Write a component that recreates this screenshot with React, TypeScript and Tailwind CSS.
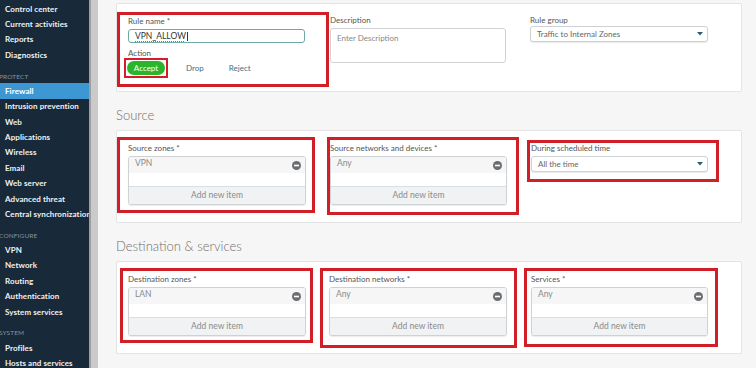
import { type ReactNode } from "react";

type PozycjaMenu = { etykieta: string; aktywna?: boolean } | { naglowek: string };

const menu: PozycjaMenu[] = [
  { etykieta: "Control center" },
  { etykieta: "Current activities" },
  { etykieta: "Reports" },
  { etykieta: "Diagnostics" },
  { naglowek: "PROTECT" },
  { etykieta: "Firewall", aktywna: true },
  { etykieta: "Intrusion prevention" },
  { etykieta: "Web" },
  { etykieta: "Applications" },
  { etykieta: "Wireless" },
  { etykieta: "Email" },
  { etykieta: "Web server" },
  { etykieta: "Advanced threat" },
  { etykieta: "Central synchronization" },
  { naglowek: "CONFIGURE" },
  { etykieta: "VPN" },
  { etykieta: "Network" },
  { etykieta: "Routing" },
  { etykieta: "Authentication" },
  { etykieta: "System services" },
  { naglowek: "SYSTEM" },
  { etykieta: "Profiles" },
  { etykieta: "Hosts and services" },
];

function Sidebar() {
  return (
    <nav className="w-[89px] shrink-0 overflow-hidden bg-[#182a3a] pt-[1px] font-['Lato',sans-serif]">
      {menu.map((p, i) =>
        "naglowek" in p ? (
          <div
            key={i}
            className="h-[20.6px] pt-[10px] -ml-[1px] text-[6.5px] leading-[8px] tracking-[0.02em] text-[#8593a0]"
          >
            {p.naglowek}
          </div>
        ) : (
          <div
            key={i}
            className={`flex h-[15.4px] items-center whitespace-nowrap pl-[5px] text-[8px] font-bold tracking-[0.01em] ${
              p.aktywna ? "bg-[#3c97d3] text-white" : "text-[#eef2f5]"
            }`}
          >
            {p.etykieta}
          </div>
        ),
      )}
    </nav>
  );
}

function Etykieta({ children, className = "" }: { children: ReactNode; className?: string }) {
  return <div className={`text-[8px] leading-[10px] text-[#555] ${className}`}>{children}</div>;
}

function Minus() {
  return (
    <svg width="9" height="9" viewBox="0 0 10 10" className="shrink-0">
      <circle cx="5" cy="5" r="5" fill="#6b6e71" />
      <rect x="2.2" y="4.1" width="5.6" height="1.8" fill="#fff" />
    </svg>
  );
}

function ListaElementow({ wartosc, szer }: { wartosc: string; szer: string }) {
  // odpowiada za pole listy z jednym elementem i wierszem dodawania
  return (
    <div
      className={`${szer} flex h-[49px] flex-col overflow-hidden rounded-[3px] border border-[#cfd2d4] bg-white shadow-[0_1px_1px_rgba(0,0,0,0.08)]`}
    >
      <div className="flex h-[16px] items-start justify-between bg-[#f6f6f6] pl-[6px] pr-[4px] pt-[1px]">
        <span className="text-[8.5px] leading-[10px] text-[#8a8a8a]">{wartosc}</span>
        <span className="mt-[3px]">
          <Minus />
        </span>
      </div>
      <div className="flex-1" />
      <div className="flex h-[18px] items-center justify-center border-t border-[#dcdfe1] bg-[#f1f2f3] text-[8.5px] text-[#8a8a8a]">
        Add new item
      </div>
    </div>
  );
}

function Wybor({ wartosc, szer, wys = "h-[16px]" }: { wartosc: string; szer: string; wys?: string }) {
  return (
    <div
      className={`${szer} ${wys} flex items-center justify-between rounded-[3px] border border-[#cfd2d4] bg-white pl-[6px] pr-[4px] shadow-[0_1px_1px_rgba(0,0,0,0.08)]`}
    >
      <span className="text-[8px] text-[#666]">{wartosc}</span>
      <svg width="6" height="4" viewBox="0 0 6 4">
        <path d="M0 0h6L3 3.5z" fill="#2f5d78" />
      </svg>
    </div>
  );
}

function Naglowek({ children }: { children: ReactNode }) {
  return (
    <h2 className="h-[38px] pt-[15px] text-[13px] leading-[16px] font-light text-[#6f6f6f]">{children}</h2>
  );
}

export default function App() {
  return (
    <div className="flex h-[368px] w-[756px] overflow-hidden bg-[#f6f6f6] font-['Lato',sans-serif]">
      <Sidebar />
      <div className="w-[9px] shrink-0 border-l-2 border-[#9e9e9e] bg-[#cacaca]" />

      <main className="flex-1 pl-[18px] pt-[3px]">
        {/* odpowiada za ogolne ustawienia reguly */}
        <section className="flex h-[89px] w-[626px] items-start rounded-[2px] border border-[#e4e4e4] bg-white">
          <div className="mt-[8px] h-[75px] w-[212px] border-[3px] border-[#d21e27]">
            <Etykieta className="ml-[8px] mt-[1px]">Rule name *</Etykieta>
            <div className="ml-[8px] mt-[3px] flex h-[14px] w-[177px] items-center rounded-[3px] border border-[#6fa9a6] pl-[6px] text-[8.5px] text-[#333]">
              <span className="underline decoration-[#e05050] decoration-dotted underline-offset-2">VPN_ALLOW</span>
              <span className="ml-[1px] h-[9px] w-px bg-[#333]" />
            </div>
            <Etykieta className="ml-[8px] mt-[5px]">Action</Etykieta>
            <div className="flex items-center">
              <div className="ml-[4px] h-[20px] w-[44px] border-[2px] border-[#d21e27] p-[1px]">
                <div className="flex h-full items-center justify-center rounded-full bg-[#2bb52c] text-[8px] text-white">
                  Accept
                </div>
              </div>
              <span className="ml-[18px] text-[8px] text-[#3f6d87]">Drop</span>
              <span className="ml-[25px] text-[8px] text-[#3f6d87]">Reject</span>
            </div>
          </div>

          <div className="ml-[1px] mt-[11px]">
            <Etykieta>Description</Etykieta>
            <div className="mt-[3px] h-[35px] w-[176px] rounded-[3px] border border-[#cfd2d4] pl-[6px] pt-[3px] text-[8px] text-[#888]">
              Enter Description
            </div>
          </div>

          <div className="ml-[24px] mt-[11px]">
            <Etykieta>Rule group</Etykieta>
            <div className="mt-[1px]">
              <Wybor wartosc="Traffic to Internal Zones" szer="w-[178px]" />
            </div>
          </div>
        </section>

        <Naglowek>Source</Naglowek>
        <section className="flex h-[93px] w-[626px] items-start rounded-[2px] border border-[#e4e4e4] bg-white">
          <div className="mt-[6px] h-[76px] w-[198px] border-[3px] border-[#d21e27] pl-[8px] pt-[3px]">
            <Etykieta>Source zones *</Etykieta>
            <div className="mt-[3px]">
              <ListaElementow wartosc="VPN" szer="w-[178px]" />
            </div>
          </div>
          <div className="ml-[12px] mt-[6px] h-[78px] w-[192px] border-[3px] border-[#d21e27] pt-[3px]">
            <Etykieta>Source networks and devices *</Etykieta>
            <div className="mt-[3px]">
              <ListaElementow wartosc="Any" szer="w-[177px]" />
            </div>
          </div>
          <div className="ml-[8px] mt-[9px] h-[42px] w-[192px] border-[3px] border-[#d21e27] pl-[1px]">
            <Etykieta>During scheduled time</Etykieta>
            <div className="mt-[3px]">
              <Wybor wartosc="All the time" szer="w-[177px]" />
            </div>
          </div>
        </section>

        <Naglowek>Destination &amp; services</Naglowek>
        <section className="flex h-[93px] w-[626px] items-start rounded-[2px] border border-[#e4e4e4] bg-white">
          <div className="ml-[3px] mt-[6px] h-[75px] w-[193px] border-[3px] border-[#d21e27] pl-[5px] pt-[3px]">
            <Etykieta>Destination zones *</Etykieta>
            <div className="mt-[3px]">
              <ListaElementow wartosc="LAN" szer="w-[178px]" />
            </div>
          </div>
          <div className="ml-[7px] mt-[6px] h-[80px] w-[197px] border-[3px] border-[#d21e27] pl-[6px] pt-[3px]">
            <Etykieta>Destination networks *</Etykieta>
            <div className="mt-[3px]">
              <ListaElementow wartosc="Any" szer="w-[178px]" />
            </div>
          </div>
          <div className="ml-[7px] mt-[6px] h-[79px] w-[194px] border-[3px] border-[#d21e27] pl-[4px] pt-[3px]">
            <Etykieta>Services *</Etykieta>
            <div className="mt-[3px]">
              <ListaElementow wartosc="Any" szer="w-[177px]" />
            </div>
          </div>
        </section>
      </main>
    </div>
  );
}
